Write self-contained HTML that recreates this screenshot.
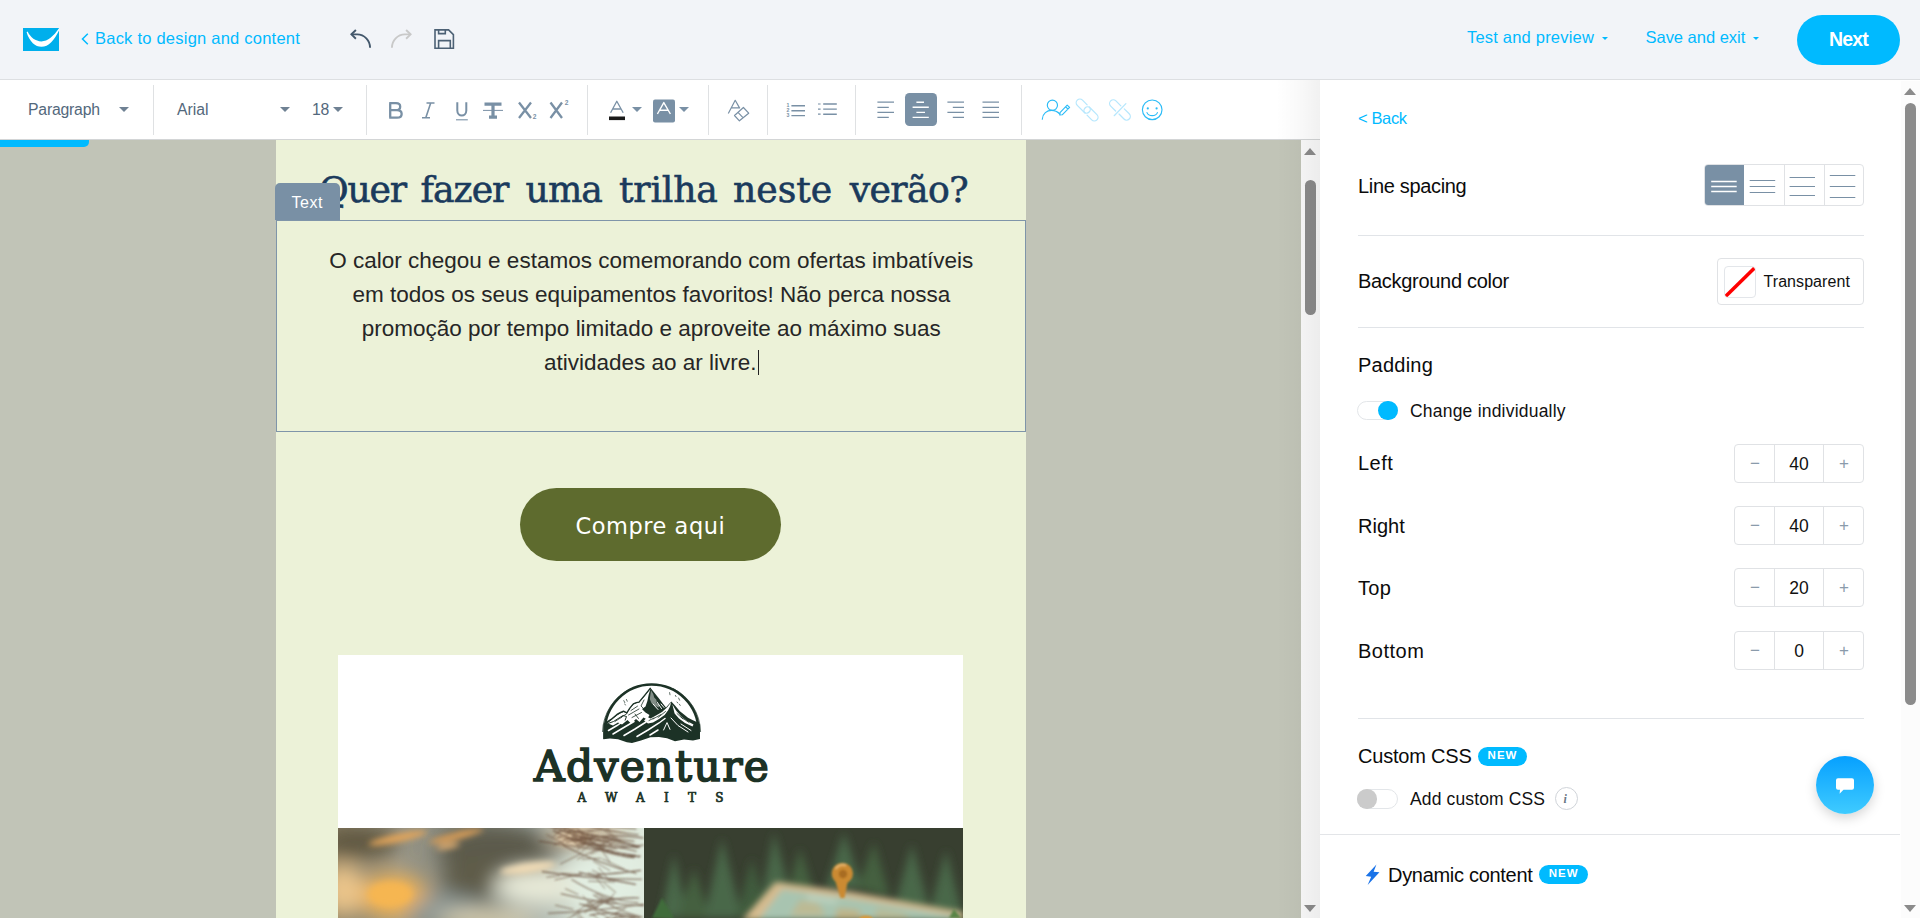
<!DOCTYPE html>
<html lang="en">
<head>
<meta charset="utf-8">
<title>Email editor</title>
<style>
*{box-sizing:border-box;margin:0;padding:0}
html,body{width:1920px;height:918px;overflow:hidden;background:#fff}
body{font-family:"Liberation Sans",sans-serif;color:#111;position:relative;-webkit-font-smoothing:antialiased}
.abs{position:absolute}
.t{position:absolute;white-space:nowrap;line-height:1;transform-origin:0 50%}
svg{display:block;overflow:visible}

/* ---------- header ---------- */
#header{left:0;top:0;width:1920px;height:80px;background:#f2f4f8;border-bottom:1px solid #dddfe2}
.blue{color:#00baff}

/* ---------- toolbar ---------- */
#toolbar{left:0;top:80px;width:1320px;height:60px;background:#fff;border-bottom:1px solid #d3d5d6}
.vsep{position:absolute;top:5px;width:1px;height:50px;background:#dfe1e3}
.tb{color:#53687c}

/* ---------- canvas ---------- */
#canvas{left:0;top:140px;width:1301px;height:778px;background:#c1c4b7;overflow:hidden}
#email{left:276px;top:0;width:750px;height:778px;background:#ecf2d8}
#cscroll{left:1301px;top:140px;width:19px;height:778px;background:#fafafa}

/* ---------- panel ---------- */
#panel{left:1320px;top:80px;width:580px;height:838px;background:#fff}
#pscroll{left:1901px;top:81px;width:19px;height:837px;background:#fcfcfc}
.lbl{font-size:20px;color:#0b0b0b}
.hr{position:absolute;height:1px;background:#e1e4e8}
.thumb{position:absolute;background:#8b8b8b;border-radius:5.5px;width:11px}
.arr{position:absolute;width:0;height:0;border-left:6.5px solid transparent;border-right:6.5px solid transparent}
.arr.up{border-bottom:7px solid #8b8b8b}
.arr.dn{border-top:7px solid #8b8b8b}
.badge{width:49px;height:19px;border-radius:10px;background:#00baff}
.stp{position:absolute;left:414px;width:130px;height:39px;border:1px solid #e0e2e5;border-radius:4px;background:#fff}
.stp i{position:absolute;top:0;width:1px;height:37px;background:#e0e2e5}
.stp b{position:absolute;top:0;height:37px;line-height:37px;text-align:center;font-weight:normal}
.stp .m,.stp .p{color:#8a9bab;font-size:17px;width:40px}
.stp .m{left:0}.stp .p{left:89px}
.stp .v{left:40px;width:48px;font-size:17.5px;color:#111;top:1px}
.tw{top:0;font-family:'DejaVu Serif','Liberation Serif',serif;font-size:36.2px;color:#1a3a5c;-webkit-text-stroke:.6px #1a3a5c}
</style>
</head>
<body>

<!-- ================= HEADER ================= -->
<div id="header" class="abs">
  <!-- logo -->
  <svg class="abs" style="left:23px;top:28px" width="36" height="23" viewBox="0 0 36 23">
    <rect width="36" height="23" fill="#00afec"/>
    <path d="M3.6 4.2 C6.5 13.8 12.4 18.8 18.4 18.8 C25.6 18.8 31.6 11.6 36 2.4 L36 0.3 C30.6 8.2 24.8 13.4 18.4 13.4 C12.4 13.4 7.6 9.6 4.6 3.6 Z" fill="#fff"/>
  </svg>
  <svg class="abs" style="left:81px;top:32.5px" width="8" height="12" viewBox="0 0 8 12" fill="none" stroke="#00baff" stroke-width="1.5"><path d="M6.8 0.8 L1.5 6 L6.8 11.2"/></svg>
  <div class="t blue" id="h-back" style="left:95px;top:30px;font-size:16.5px;letter-spacing:.23px">Back to design and content</div>
  <!-- undo -->
  <svg class="abs" style="left:349px;top:28px" width="24" height="22" viewBox="0 0 24 22" fill="none" stroke="#44586c" stroke-width="1.9" stroke-linecap="butt" stroke-linejoin="miter">
    <path d="M6.900 2 L2.400 6.350 L6.900 10.700"/><path d="M2.600 6.350 H8.200 A12.900 13.450 0 0 1 21.100 19.800"/>
  </svg>
  <!-- redo -->
  <svg class="abs" style="left:389px;top:28px" width="24" height="22" viewBox="0 0 24 22" fill="none" stroke="#c9c9c9" stroke-width="1.9" stroke-linecap="butt" stroke-linejoin="miter">
    <path d="M17.100 2 L21.600 6.350 L17.100 10.700"/><path d="M21.400 6.350 H15.800 A12.900 13.450 0 0 0 2.900 19.800"/>
  </svg>
  <!-- save -->
  <svg class="abs" style="left:434px;top:29px" width="22" height="21" viewBox="0 0 22 21" fill="none" stroke="#4d6175" stroke-width="1.600" stroke-linejoin="miter">
    <path d="M1 0.900 H14.600 L19.400 5.700 V19.300 H1 Z"/><path d="M4.600 0.900 V4.600 H11.300 V0.900"/><path d="M4.600 19.300 V11.600 H16.300 V19.300"/>
  </svg>
  <div class="t blue" id="h-test" style="left:1467px;top:29px;font-size:16.5px;letter-spacing:.2px">Test and preview</div>
  <div class="arr dn" style="left:1602px;top:36.5px;border-left-width:3px;border-right-width:3px;border-top:3px solid #00baff"></div>
  <div class="t blue" id="h-save" style="left:1645.5px;top:29px;font-size:16.5px;letter-spacing:-.02px">Save and exit</div>
  <div class="arr dn" style="left:1753px;top:36.5px;border-left-width:3px;border-right-width:3px;border-top:3px solid #00baff"></div>
  <div class="abs" style="left:1797px;top:15px;width:103px;height:50px;border-radius:25px;background:#00baff"></div>
  <div class="t" id="h-next" style="left:1829px;top:29.5px;font-size:19.5px;color:#fff;font-weight:bold;letter-spacing:-.8px">Next</div>
</div>

<!-- ================= TOOLBAR ================= -->
<div id="toolbar" class="abs">
  <div class="t tb" id="tb-par" style="left:28px;top:21.5px;font-size:15.8px;letter-spacing:-.22px">Paragraph</div>
  <div class="arr dn" style="left:118.700px;top:27px;border-left-width:5.200px;border-right-width:5.200px;border-top:5.500px solid #6f8193"></div>
  <div class="vsep" style="left:153px"></div>
  <div class="t tb" id="tb-font" style="left:177px;top:21.5px;font-size:15.8px">Arial</div>
  <div class="arr dn" style="left:279.700px;top:27px;border-left-width:5.200px;border-right-width:5.200px;border-top:5.500px solid #6f8193"></div>
  <div class="t tb" id="tb-size" style="left:312px;top:21.5px;font-size:15.8px;letter-spacing:-.3px">18</div>
  <div class="arr dn" style="left:333px;top:27px;border-left-width:5.200px;border-right-width:5.200px;border-top:5.500px solid #6f8193"></div>
  <div class="vsep" style="left:366px"></div>

  <!-- B I U T X2 X2 -->
  <svg class="abs" style="left:384px;top:18px" width="190" height="26" viewBox="384 98 190 26" fill="none" stroke="#7990a5" stroke-width="2" stroke-linejoin="round" stroke-linecap="butt">
    <!-- B -->
    <path d="M390.2 103.2 V117.6 M389.2 103.2 H396 C401.6 103.2 401.6 110.2 396 110.2 H390.2 M390.2 110.2 H397 C403.2 110.2 403.2 117.6 397 117.6 H389.2" stroke-width="2.3"/>
    <!-- I -->
    <path d="M426.5 103 H434.5 M422 117.8 H430 M430.7 103 L425.8 117.8" stroke-width="1.6"/>
    <!-- U -->
    <path d="M457.3 102.2 V110.5 C457.3 117.2 466.3 117.2 466.3 110.5 V102.2" stroke-width="2"/>
    <path d="M456 119.8 H467.8" stroke-width="1.1"/>
    <!-- T strike -->
    <path d="M484.5 104.2 H501.5 M493 104 V117.2 M489 117.2 H497" stroke-width="3.2"/>
    <path d="M483 110.4 H503" stroke-width="1" stroke="#7990a5"/>
    <!-- X sub -->
    <path d="M519 102.5 L531 118 M531 102.5 L519 118" stroke-width="2.3"/>
    <!-- X sup -->
    <path d="M550.5 102.5 L562 118 M562 102.5 L550.5 118" stroke-width="2.3"/>
  </svg>
  <div class="t" style="left:532.8px;top:33.8px;font-size:6.6px;font-weight:bold;color:#7990a5">2</div>
  <div class="t" style="left:564.8px;top:20.2px;font-size:6.6px;font-weight:bold;color:#7990a5">2</div>
  <div class="vsep" style="left:587px"></div>

  <!-- text colour -->
  <svg class="abs" style="left:606px;top:18px" width="90" height="26" viewBox="606 98 90 26" fill="none" stroke="#7990a5" stroke-width="1.3" stroke-linejoin="round">
    <path d="M610.6 112.8 L616.8 101.2 L623.2 112.8 M613 109 H620.8"/>
    <rect x="609" y="116.5" width="16" height="3.6" fill="#1a1a1a" stroke="none"/>
    <rect x="653" y="99.5" width="22" height="23" rx="2" fill="#7990a5" stroke="none"/>
    <path d="M657.4 114 L663.8 102.6 L670.4 114 M659.8 110.2 H668" stroke="#fff" stroke-width="1.4"/>
  </svg>
  <div class="arr dn" style="left:632px;top:26.800px;border-left-width:5px;border-right-width:5px;border-top:5.200px solid #7990a5"></div>
  <div class="arr dn" style="left:679px;top:26.800px;border-left-width:5px;border-right-width:5px;border-top:5.200px solid #7990a5"></div>
  <div class="vsep" style="left:708px"></div>

  <!-- clear format -->
  <svg class="abs" style="left:724px;top:18px" width="30" height="26" viewBox="724 98 30 26" fill="none" stroke="#7990a5" stroke-width="1.2" stroke-linejoin="round">
    <path d="M728.300 113.500 L735.200 100.300 L739.800 108.400 M731.400 107.800 H739.200"/>
    <path d="M743.400 107.500 L748.700 113.200 L739.400 120.800 L734.500 115.500 Z M738 112.300 L743.200 117.900"/>
  </svg>
  <div class="vsep" style="left:767px"></div>

  <!-- lists -->
  <svg class="abs" style="left:784px;top:18px" width="60" height="26" viewBox="784 98 60 26" fill="none" stroke="#7990a5" stroke-width="1.4">
    <path d="M791.4 105.7 H805 M791.4 110.7 H805 M791.4 115.6 H805"/>
    <path d="M823.2 104 H836.8 M823.2 109.1 H836.8 M823.2 114.2 H836.8"/>
    <path d="M818 104 H820.6 M818 109.1 H820.6 M818 114.2 H820.6" stroke-width="1.2"/>
  </svg>
  <div class="t" style="left:786.5px;top:23px;font-size:5.2px;font-weight:bold;color:#7990a5">1</div>
  <div class="t" style="left:786.5px;top:28px;font-size:5.2px;font-weight:bold;color:#7990a5">2</div>
  <div class="t" style="left:786.5px;top:33px;font-size:5.2px;font-weight:bold;color:#7990a5">3</div>
  <div class="vsep" style="left:855px"></div>

  <!-- align -->
  <svg class="abs" style="left:874px;top:12px" width="130" height="36" viewBox="874 92 130 36" fill="none" stroke="#7990a5" stroke-width="1.3">
    <path d="M877.4 102.2 H894 M877.4 107.3 H888.8 M877.4 112.4 H894 M877.4 117.4 H888.8"/>
    <rect x="905" y="93" width="32" height="33" rx="4.5" fill="#7990a5" stroke="none"/>
    <path d="M916.4 102.2 H924 M912.6 107.3 H928.8 M916.4 112.4 H925 M912.6 117.4 H928.8" stroke="#fff" stroke-width="1.4"/>
    <path d="M947.4 102.2 H964 M952.8 107.3 H964 M947.4 112.4 H964 M952.8 117.4 H964"/>
    <path d="M982.5 102.2 H999 M982.5 107.3 H999 M982.5 112.4 H999 M982.5 117.4 H999"/>
  </svg>
  <div class="vsep" style="left:1021px"></div>

  <!-- personalise / link / unlink / emoji -->
  <svg class="abs" style="left:1038px;top:16px" width="130" height="28" viewBox="1038 96 130 28" fill="none" stroke="#2bbcf7" stroke-width="1.15" stroke-linecap="round" stroke-linejoin="round">
    <circle cx="1052.4" cy="105.2" r="5.1"/>
    <path d="M1042.3 119.2 C1042.6 113.4 1047 110.4 1051.6 110.4 C1055.2 110.4 1057.8 112 1059.8 114"/>
    <path d="M1060 112.6 L1067.2 105.2 L1069.6 107.4 L1062.2 114.8 L1059.8 115 Z M1065.6 106.8 L1068 109"/>
    <g stroke="#b6e7fd" stroke-width="1.25">
      <path d="M-3.6 -3.7 H-10.2 A3.7 3.7 0 0 0 -10.2 3.7 H-0.8 A3.7 3.7 0 0 0 -0.8 -3.7" transform="translate(1087.1 110) rotate(45)"/>
      <path d="M3.6 3.7 H10.2 A3.7 3.7 0 0 0 10.2 -3.7 H0.8 A3.7 3.7 0 0 0 0.8 3.7" transform="translate(1087.1 110) rotate(45)"/>
      <path d="M7 -3.7 H0 A3.7 3.7 0 0 0 0 3.7 H7" transform="translate(1113.3 103.5) rotate(45)"/>
      <path d="M-7 -3.7 H0 A3.7 3.7 0 0 1 0 3.7 H-7" transform="translate(1126.6 116.4) rotate(45)"/>
      <path d="M1125.9 103.6 L1114.2 115.7"/>
    </g>
    <circle cx="1152.2" cy="109.8" r="9.8"/>
    <path d="M1147 112.6 C1148.6 116.6 1155.8 116.6 1157.4 112.6"/>
    <circle cx="1147.8" cy="108.4" r="1.1" fill="#2bbcf7" stroke="none"/>
    <circle cx="1156.6" cy="108.4" r="1.1" fill="#2bbcf7" stroke="none"/>
  </svg>
</div>
<!-- progress bar -->
<div class="abs" style="left:0;top:140px;width:89px;height:6.5px;background:#00baff;border-bottom-right-radius:5px;z-index:5"></div>

<!-- ================= CANVAS ================= -->
<div id="canvas" class="abs">
  <div id="email" class="abs">
    <!-- title -->
    <div class="abs" id="e-title" style="left:0;top:31.7px;width:750px;height:37px"><span class="t tw" id="tw0" style="left:43px;letter-spacing:-1.2px">Quer</span> <span class="t tw" id="tw1" style="left:144.6px;letter-spacing:-1.0px">fazer</span> <span class="t tw" id="tw2" style="left:249.5px;letter-spacing:-0.9px">uma</span> <span class="t tw" id="tw3" style="left:343px;letter-spacing:-0.2px">trilha</span> <span class="t tw" id="tw4" style="left:457px;letter-spacing:0.0px">neste</span> <span class="t tw" id="tw5" style="left:573.7px;letter-spacing:-0.6px">verão?</span></div>
    <!-- selected text block -->
    <div class="abs" style="left:0;top:80px;width:750px;height:212px;border:1px solid #7f95a9"></div>
    <div class="abs" style="left:-1px;top:43px;width:65px;height:37px;background:#7990a5;border-radius:5px 5px 0 0"></div>
    <div class="t" id="e-tag" style="left:15.5px;top:54.8px;font-size:16px;color:#fff;letter-spacing:.5px">Text</div>
    <div class="abs" id="e-para" style="left:50.3px;top:104.3px;width:650px;font-size:22.5px;line-height:33.75px;color:#262626;text-align:center">O calor chegou e estamos comemorando com ofertas imbatíveis em todos os seus equipamentos favoritos! Não perca nossa promoção por tempo limitado e aproveite ao máximo suas atividades ao ar livre.<span style="display:inline-block;width:1px;height:25px;background:#222;vertical-align:-5px;margin-left:1px"></span></div>
    <!-- button -->
    <div class="abs" style="left:244px;top:348px;width:261px;height:73px;border-radius:37px;background:#5e6b2e"></div>
    <div class="t" id="e-btn" style="left:299.5px;top:374.9px;font-family:'DejaVu Sans','Liberation Sans',sans-serif;font-size:22.5px;color:#fff;letter-spacing:.52px">Compre aqui</div>
    <!-- card -->
    <div class="abs" style="left:62px;top:515px;width:625px;height:173px;background:#fff"></div>
    <!-- emblem -->
    <svg class="abs" style="left:325px;top:542px" width="100" height="62" viewBox="0 0 100 62">
      <path d="M3.6 57 V50 A47 47.5 0 0 1 97.6 50 V57" fill="none" stroke="#1c3226" stroke-width="2.6"/>
      <path d="M1.5 50 A48.5 49.5 0 0 1 30 6.5" fill="none" stroke="#1c3226" stroke-width=".7"/>
      <path d="M99.6 50 A48.5 49.5 0 0 0 72 6.5" fill="none" stroke="#1c3226" stroke-width=".7"/>
      <path d="M2.4 42.5 L5.3 40.6 L10 37.4 L16 32.4 L19.6 30.4 L22.5 29.2 L25.8 30.8 L29 25.8 L32.3 21.8 L35.4 20.6 L38 20.2 L43.6 13.4 L49.6 5.9 L52.6 9.8 L58.4 16.9 L61.8 21.4 L65 25.6 L67.6 22.6 L70.3 19.5 L74 23.6 L78.9 29.2 L83 32.6 L87 35.7 L91.4 37.9 L95.2 39.8 L98.9 42 L98.9 56.9 L92 58.6 L83 57.4 L74 59.2 L66 56.2 L58 55 L49.5 55.2 L40 58.6 L31 61 L25.8 60.2 L17 57.2 L9 56.4 L2.4 57.2 Z" fill="#1c3226"/>
      <!-- snow faces -->
      <path d="M49.4 7 L43.8 14 L38.2 20.6 L35 21.2 L32.4 22.4 L29 26.4 L25.8 31.4 L23 30 L19.600 31.200 L16 33.400 L11 37.600 L6.500 41.200 L12 43.500 L17 40.500 L21 42.500 L26.500 38 L30 41.500 L35 37 L38.500 40 L42.500 35.500 L46 37.500 L48.500 33 L44.500 30.500 L41 27 L44.500 24.500 L46.400 19 L47.600 13 Z" fill="#fff"/>
      <path d="M50 8.200 L52.200 12 L53.200 15.600 L55.600 18 L55 20.400 L58.200 23.400 L57.600 25.600 L53.600 23.600 L50.400 21 L48.800 17 Z" fill="#fff" opacity=".45"/>
      <path d="M70.200 20.200 L66 25.600 L61 30 L55 33.600 L49.500 36.400 L46.500 35 L43 38.500 L47 41.600 L52 40.600 L58 37 L63.600 33 L67 28.400 L69 24.400 Z" fill="#fff"/>
      <path d="M71.400 22.400 L75 28.600 L80 34.200 L86 39 L92.500 42.600 L91.500 44.400 L84 41 L78 36.600 L73.600 31.400 Z" fill="#fff"/>
      <path d="M75.500 26 L79 30 L84 34 L89 37.500 L88 38.500 L82.500 35.500 L78 32 Z" fill="#1c3226" opacity=".0"/>
      <!-- white streaks over dark -->
      <g stroke="#fff" stroke-width="1.500" stroke-linecap="round" fill="none">
        <path d="M7.500 48.500 L16 43.500 L24 38"/>
        <path d="M12 52 L22 46 L33 39.500"/>
        <path d="M23 53.500 L34 47 L45 40"/>
        <path d="M36 54.500 L47 48 L58 41 L64 36.500"/>
        <path d="M49 53 L57 48"/>
      </g>
      <g stroke="#fff" stroke-width="1" stroke-linecap="round" fill="none">
        <path d="M62.600 48 L66 40.600 L69 47.400"/>
        <path d="M70 36 L77 43.500 L87 50"/>
        <path d="M80 42 L90 48.500"/>
        <path d="M60 22 L63 25.500 M56 20 L60.500 26.500 M52 22 L57 27.500"/>
      </g>
      <path d="M3 42.500 L5.300 40.600 L10 37.400 L16 32.400 L19.600 30.400 L22.500 29.200 L25.800 30.800 L29 25.800 L32.300 21.800 L35.400 20.600 L38 20.200 L43.600 13.400 L49.600 5.900" fill="none" stroke="#1c3226" stroke-width="1.300" stroke-linejoin="round"/>
      <path d="M7 41.500 L12.500 39.500 L18 36 L22 33.500 L25.500 34.500 L24 38.500" fill="none" stroke="#1c3226" stroke-width="1"/>
      <!-- dark texture over snow -->
      <g stroke="#1c3226" stroke-width=".8" stroke-linecap="round" fill="none">
        <path d="M30 28.500 L36.500 24.200 M27.500 33 L38 27 M31 35.500 L40.500 30.500 M20 35.500 L26 31.500 M14 39.500 L21 35 M34 32 L37.500 36.500 M43 18 L40 24 L43.500 27.500"/>
        <path d="M52 37 L60 32.500 M57 35.500 L64.500 29.500 M48 38.500 L53 36"/>
        <path d="M76 31.500 L82 37 M80 35 L88 40.500"/>
      </g>
      <g stroke="#1c3226" stroke-width=".7" stroke-linecap="round">
        <path d="M22.800 18.600 L23.800 20.600 M25.400 17.400 L26.200 19.200 M23.800 22 L24.400 23"/>
        <path d="M68.600 10.600 L69 12.800 M74.400 13.400 L75 14.600 M77.600 16 L78.600 18.200 M76 20 L76.800 21 M78.400 22.200 L79.200 23.400"/>
      </g>
    </svg>
    <div class="t" id="e-adv" style="left:258px;top:605.8px;font-family:'DejaVu Serif','Liberation Serif',serif;font-size:42.3px;color:#1c3226;letter-spacing:1.45px;-webkit-text-stroke:1.7px #1c3226">Adventure</div>
    <div class="t" id="e-awa" style="left:301.500px;top:651.500px;font-family:'DejaVu Serif','Liberation Serif',serif;font-size:12px;color:#1c3226;letter-spacing:19.300px;-webkit-text-stroke:.7px #1c3226">AWAITS</div>
    <!-- photos -->
    <svg class="abs" style="left:62px;top:688px" width="625" height="90" viewBox="0 0 625 90">
      <defs>
        <filter id="b3" x="-20%" y="-20%" width="140%" height="140%"><feGaussianBlur stdDeviation="3"/></filter>
        <filter id="b6" x="-30%" y="-30%" width="160%" height="160%"><feGaussianBlur stdDeviation="6"/></filter>
        <filter id="b10" x="-40%" y="-40%" width="180%" height="180%"><feGaussianBlur stdDeviation="10"/></filter>
        <filter id="b4" x="-30%" y="-30%" width="160%" height="160%"><feGaussianBlur stdDeviation="4"/></filter>
        <filter id="b1" x="-10%" y="-10%" width="120%" height="120%"><feGaussianBlur stdDeviation="1.2"/></filter>
        <clipPath id="cl"><rect x="0" y="0" width="306" height="90"/></clipPath>
        <clipPath id="cr"><rect x="306" y="0" width="319" height="90"/></clipPath>
        <linearGradient id="gl" x1="0" x2="1" y1="0" y2="0">
          <stop offset="0" stop-color="#8d8267"/><stop offset=".2" stop-color="#9a9788"/><stop offset=".45" stop-color="#7e8278"/><stop offset=".62" stop-color="#a4aca6"/><stop offset=".8" stop-color="#d2dccf"/><stop offset="1" stop-color="#dfeadd"/>
        </linearGradient>
      </defs>
      <g clip-path="url(#cl)">
        <rect width="306" height="90" fill="url(#gl)"/>
        <g filter="url(#b10)">
          <ellipse cx="20" cy="14" rx="40" ry="16" fill="#5f5640"/>
          <ellipse cx="160" cy="22" rx="60" ry="26" fill="#5b5a4c"/>
          <ellipse cx="135" cy="50" rx="30" ry="22" fill="#5f5c48"/>
          <ellipse cx="55" cy="68" rx="34" ry="22" fill="#f2b352"/>
          <ellipse cx="5" cy="62" rx="22" ry="26" fill="#eac48a"/>
          <ellipse cx="110" cy="82" rx="40" ry="14" fill="#8e9a98"/>
          <ellipse cx="200" cy="58" rx="44" ry="18" fill="#e8ead8"/>
          <ellipse cx="150" cy="92" rx="50" ry="8" fill="#e9dcb8"/>
          <ellipse cx="268" cy="45" rx="36" ry="60" fill="#e2eee2"/>
          <ellipse cx="226" cy="14" rx="24" ry="12" fill="#8c8c80"/>
          <ellipse cx="250" cy="6" rx="40" ry="12" fill="#c2ac8c"/>
        </g>
        <g filter="url(#b3)">
          <ellipse cx="60" cy="10" rx="30" ry="4" fill="#e3a55a" transform="rotate(-12 60 10)"/>
          <ellipse cx="118" cy="8" rx="28" ry="3.4" fill="#e0a056" transform="rotate(-14 118 8)"/>
          <ellipse cx="110" cy="18" rx="12" ry="2.6" fill="#eeb673" transform="rotate(-10 110 18)"/>
          <ellipse cx="190" cy="40" rx="28" ry="5" fill="#f1dcb6" transform="rotate(-8 190 40)"/>
          <ellipse cx="52" cy="66" rx="22" ry="12" fill="#f6b651"/>
          <ellipse cx="234" cy="10" rx="16" ry="8" fill="#e7d2b0"/>
        </g>
        <g filter="url(#b1)" stroke="#5f4230" stroke-width="1.1" fill="none" opacity=".8" stroke-linecap="round">
          <path d="M297.5 27.4 Q256.4 23.0 215.2 2.7"/><path d="M254.8 11.9 L237.6 -1.0" stroke-width=".8"/><path d="M251.4 11.0 L241.8 8.9" stroke-width=".8"/><path d="M232.0 5.5 L220.0 9.1" stroke-width=".8"/><path d="M301.8 89.8 Q268.9 85.9 236.0 106.7"/><path d="M248.2 102.3 L237.6 91.6" stroke-width=".8"/><path d="M269.9 99.9 L258.6 102.2" stroke-width=".8"/><path d="M256.8 100.6 L239.0 88.3" stroke-width=".8"/><path d="M298.1 1.0 Q255.9 -3.7 213.8 -7.4"/><path d="M243.2 -4.7 L229.8 3.5" stroke-width=".8"/><path d="M237.5 -6.6 L219.1 -5.9" stroke-width=".8"/><path d="M228.6 -4.5 L215.4 8.9" stroke-width=".8"/><path d="M300.2 6.8 Q255.6 2.4 211.0 -14.2"/><path d="M271.3 1.0 L249.6 3.1" stroke-width=".8"/><path d="M226.6 -11.6 L206.0 -9.0" stroke-width=".8"/><path d="M242.4 -7.1 L219.3 5.4" stroke-width=".8"/><path d="M302.6 42.4 Q280.7 45.6 258.7 46.7"/><path d="M263.3 48.2 L250.2 45.0" stroke-width=".8"/><path d="M271.8 42.5 L255.5 33.2" stroke-width=".8"/><path d="M286.4 41.3 L264.5 31.0" stroke-width=".8"/><path d="M299.9 19.8 Q251.6 14.1 203.3 -4.5"/><path d="M239.1 6.8 L216.3 17.0" stroke-width=".8"/><path d="M254.8 7.9 L240.3 18.7" stroke-width=".8"/><path d="M215.4 -3.6 L204.2 -11.1" stroke-width=".8"/><path d="M300.8 18.3 Q261.7 7.2 222.6 2.4"/><path d="M257.7 8.8 L239.5 21.5" stroke-width=".8"/><path d="M244.9 7.1 L225.8 12.0" stroke-width=".8"/><path d="M274.8 15.4 L252.8 25.9" stroke-width=".8"/><path d="M299.9 74.8 Q267.0 72.3 234.0 51.6"/><path d="M277.7 64.4 L265.9 54.9" stroke-width=".8"/><path d="M266.7 60.4 L258.7 50.6" stroke-width=".8"/><path d="M276.1 65.6 L267.7 76.1" stroke-width=".8"/><path d="M297.5 56.4 Q269.3 51.8 241.1 44.4"/><path d="M276.4 54.0 L250.5 53.1" stroke-width=".8"/><path d="M264.2 46.8 L254.4 42.4" stroke-width=".8"/><path d="M271.6 52.9 L260.7 39.5" stroke-width=".8"/><path d="M301.3 90.1 Q276.5 81.9 251.8 87.1"/><path d="M270.7 91.1 L247.2 96.6" stroke-width=".8"/><path d="M278.7 87.9 L267.7 95.5" stroke-width=".8"/><path d="M270.6 89.9 L256.7 82.2" stroke-width=".8"/><path d="M305.8 76.2 Q258.1 83.1 210.4 85.2"/><path d="M234.9 81.3 L217.5 77.2" stroke-width=".8"/><path d="M275.6 76.2 L262.5 69.5" stroke-width=".8"/><path d="M237.6 85.4 L221.5 97.6" stroke-width=".8"/><path d="M305.6 93.8 Q273.7 85.9 241.8 75.9"/><path d="M278.9 84.6 L259.7 95.8" stroke-width=".8"/><path d="M254.3 79.3 L234.6 87.7" stroke-width=".8"/><path d="M283.2 88.5 L258.8 96.4" stroke-width=".8"/><path d="M300.8 70.0 Q275.0 69.0 249.2 78.3"/><path d="M260.5 79.3 L245.4 76.6" stroke-width=".8"/><path d="M256.0 78.6 L244.9 68.1" stroke-width=".8"/><path d="M280.6 75.7 L258.1 65.8" stroke-width=".8"/><path d="M305.8 77.7 Q264.4 76.1 223.1 65.8"/><path d="M274.5 70.2 L249.0 74.4" stroke-width=".8"/><path d="M254.9 72.9 L239.0 83.3" stroke-width=".8"/><path d="M240.0 66.5 L227.4 60.7" stroke-width=".8"/><path d="M301.9 19.1 Q273.4 11.4 245.0 10.3"/><path d="M253.8 10.8 L237.5 13.1" stroke-width=".8"/><path d="M254.0 11.2 L229.4 11.3" stroke-width=".8"/><path d="M266.7 13.8 L258.3 12.1" stroke-width=".8"/><path d="M296.0 13.3 Q250.1 8.9 204.1 -6.8"/><path d="M228.4 -1.1 L214.6 -0.6" stroke-width=".8"/><path d="M237.8 2.3 L227.9 4.0" stroke-width=".8"/><path d="M254.7 3.0 L232.8 3.2" stroke-width=".8"/><path d="M303.6 51.2 Q253.9 51.5 204.3 43.6"/><path d="M243.7 46.7 L223.2 45.3" stroke-width=".8"/><path d="M242.0 46.3 L217.1 51.9" stroke-width=".8"/><path d="M221.6 47.5 L208.9 49.2" stroke-width=".8"/><path d="M304.4 89.3 Q279.9 83.9 255.5 66.9"/><path d="M287.6 80.1 L278.3 84.8" stroke-width=".8"/><path d="M266.7 74.4 L255.9 80.5" stroke-width=".8"/><path d="M270.3 71.6 L246.5 84.7" stroke-width=".8"/><path d="M305.5 17.0 Q272.6 23.7 239.6 11.4"/><path d="M252.9 10.5 L237.1 10.9" stroke-width=".8"/><path d="M272.4 12.3 L258.6 18.5" stroke-width=".8"/><path d="M285.0 15.5 L269.1 2.0" stroke-width=".8"/><path d="M302.2 28.1 Q265.6 30.9 228.9 3.1"/><path d="M245.6 11.6 L235.7 5.1" stroke-width=".8"/><path d="M278.5 21.7 L265.6 11.3" stroke-width=".8"/><path d="M261.7 16.8 L238.9 10.0" stroke-width=".8"/><path d="M305.2 9.9 Q266.6 4.2 228.1 14.2"/><path d="M279.4 12.5 L263.7 0.5" stroke-width=".8"/><path d="M238.7 14.4 L216.2 2.7" stroke-width=".8"/><path d="M242.5 10.8 L218.9 9.5" stroke-width=".8"/><path d="M301.5 28.9 Q251.4 19.8 201.3 13.2"/><path d="M239.8 17.7 L229.8 8.2" stroke-width=".8"/><path d="M268.4 21.9 L254.8 16.5" stroke-width=".8"/><path d="M225.8 15.8 L208.8 6.8" stroke-width=".8"/><path d="M296.2 29.7 Q268.0 28.0 239.9 2.4"/><path d="M260.7 10.6 L244.1 22.8" stroke-width=".8"/><path d="M275.7 21.7 L259.9 21.5" stroke-width=".8"/><path d="M251.1 7.2 L234.0 12.5" stroke-width=".8"/><path d="M299.4 93.2 Q252.4 96.3 205.3 97.8"/><path d="M248.3 94.8 L239.4 84.4" stroke-width=".8"/><path d="M267.2 96.2 L254.6 86.8" stroke-width=".8"/><path d="M266.4 96.9 L242.8 101.6" stroke-width=".8"/><path d="M298.4 23.2 Q268.9 16.3 239.4 16.3"/><path d="M264.9 17.9 L239.6 31.1" stroke-width=".8"/><path d="M261.3 17.3 L235.9 12.0" stroke-width=".8"/><path d="M268.1 16.7 L253.2 16.0" stroke-width=".8"/><path d="M298.0 45.3 Q261.6 35.9 225.2 17.5"/><path d="M272.2 34.8 L263.5 21.5" stroke-width=".8"/><path d="M262.9 30.3 L244.3 31.1" stroke-width=".8"/><path d="M243.4 25.4 L222.5 36.0" stroke-width=".8"/>
        </g>
        
      </g>
      <g clip-path="url(#cr)">
        <rect x="306" width="319" height="90" fill="#383f30"/>
        <g filter="url(#b4)" fill="#4a6748">
          <path d="M322 90 L336 26 L350 90 Z"/><path d="M340 90 L356 40 L372 90 Z" fill="#44603f"/>
          <path d="M366 90 L384 10 L404 90 Z"/><path d="M398 90 L414 30 L430 90 Z" fill="#415c3e"/>
          <path d="M420 90 L436 4 L456 80 Z"/><path d="M448 70 L462 20 L476 64 Z" fill="#44603f"/>
          <path d="M488 60 L506 4 L524 60 Z"/><path d="M520 60 L536 14 L552 70 Z" fill="#44603f"/>
          <path d="M556 80 L574 16 L592 84 Z"/><path d="M590 90 L608 22 L625 90 Z" fill="#4a6748"/>
        </g>
        <g filter="url(#b3)">
          <path d="M437.600 54 L514 64 L625 84 L625 92 L404 92 Z" fill="#d6bb8e"/>
          <path d="M444 61 L512 70 L618 88 L618 92 L420 92 Z" fill="#a8c4b0"/>
          <path d="M462 72 L480 75 L488 88 L452 88 Z" fill="#d0b078" opacity=".5"/><path d="M500 80 L520 82 L526 92 L496 92 Z" fill="#cfa868" opacity=".55"/><path d="M540 80 L566 85 L574 92 L534 92 Z" fill="#cfae76" opacity=".4"/><path d="M470 66 L500 71 L498 76 L468 72 Z" fill="#c9dac8" opacity=".6"/>
        </g>
        <g filter="url(#b1)">
          <circle cx="504.400" cy="45.500" r="10.600" fill="#cb8a33"/>
          <circle cx="505" cy="46" r="4.200" fill="#a86c24"/><path d="M497.500 41 A8 8 0 0 1 508 37.500" stroke="#e6b46a" stroke-width="2.200" fill="none"/>
          <path d="M497 52 L502.500 70 L506.500 70 L510 52 Z" fill="#cb8a33"/>
          <path d="M314 90 L324 70 L336 90 Z" fill="#3f6c3a"/>
          <path d="M611 90 L616 81 L623 90 Z" fill="#5a8446"/>
          <ellipse cx="528" cy="91" rx="7" ry="3.500" fill="#d99a3a"/>
        </g>
      </g>
    </svg>
  </div>
</div>
<div id="cscroll" class="abs">
  <div class="arr up" style="left:3px;top:8px"></div>
  <div class="thumb" style="left:4px;top:40px;height:135px"></div>
  <div class="arr dn" style="left:3px;top:764.5px"></div>
</div>

<div class="abs" style="left:1276px;top:80px;width:44px;height:838px;background:linear-gradient(90deg,rgba(0,0,0,0) 0%,rgba(0,0,0,.02) 45%,rgba(0,0,0,.055) 100%);z-index:6;pointer-events:none"></div>
<!-- ================= PANEL ================= -->
<div id="panel" class="abs">
  <!-- coordinates inside panel: x-1320, y-80 -->
  <div class="t blue" id="p-back" style="left:38px;top:30px;font-size:16.5px;letter-spacing:-.38px">&lt; Back</div>

  <div class="t lbl" id="p-ls" style="left:38px;top:96.4px;letter-spacing:-.33px">Line spacing</div>
  <!-- line spacing button group -->
  <div class="abs" style="left:384px;top:84px;width:160px;height:42px;border:1px solid #e0e2e5;border-radius:4px;overflow:hidden;background:#fff">
    <div class="abs" style="left:-1px;top:-1px;width:40px;height:42px;background:#7990a5"></div>
    <div class="abs" style="left:79px;top:0;width:1px;height:40px;background:#e0e2e5"></div>
    <div class="abs" style="left:119px;top:0;width:1px;height:40px;background:#e0e2e5"></div>
    <svg class="abs" style="left:-1px;top:-1px" width="160" height="42" viewBox="0 0 160 42" fill="none" stroke="#7990a5" stroke-width="1.2">
      <path d="M7.2 17.5 H32.7 M7.2 22.5 H32.7 M7.2 27.5 H32.7" stroke="#fff" stroke-width="1.3"/>
      <path d="M45.7 16.5 H71.200 M45.7 22.5 H71.200 M45.7 28.5 H71.200"/>
      <path d="M85.600 13.5 H111 M85.600 22.5 H111 M85.600 31.5 H111"/>
      <path d="M125.800 11.5 H151.300 M125.800 22.5 H151.300 M125.800 33.5 H151.300"/>
    </svg>
  </div>
  <div class="hr" style="left:38px;top:155px;width:506px"></div>

  <div class="t lbl" id="p-bg" style="left:38px;top:191px;letter-spacing:-.3px">Background color</div>
  <div class="abs" style="left:397px;top:178px;width:147px;height:47px;border:1px solid #e0e2e5;border-radius:4px;background:#fff"></div>
  <div class="abs" style="left:404px;top:186px;width:32px;height:32px;border:1px solid #e3e6ea;border-radius:4px;overflow:hidden;background:#fff">
    <svg width="30" height="30" viewBox="0 0 30 30"><path d="M0.500 29.500 L29.500 1" stroke="#f00" stroke-width="3.500"/></svg>
  </div>
  <div class="t" id="p-tr" style="left:443.5px;top:193.7px;font-size:16px;color:#111;letter-spacing:.07px">Transparent</div>
  <div class="hr" style="left:38px;top:247px;width:506px"></div>

  <div class="t lbl" id="p-pad" style="left:38px;top:275px;letter-spacing:.24px">Padding</div>
  <!-- toggle on -->
  <div class="abs" style="left:37px;top:321px;width:41px;height:19px;border-radius:10px;background:#fff;border:1px solid #e3e6e9"></div>
  <div class="abs" style="left:58.300px;top:320.600px;width:19.600px;height:19.600px;border-radius:50%;background:#00baff"></div>
  <div class="t" id="p-ci" style="left:90px;top:322.6px;font-size:17.5px;color:#111;letter-spacing:.21px">Change individually</div>

  <div class="t lbl" id="p-l" style="left:38px;top:373px;letter-spacing:.45px">Left</div>
  <div class="t lbl" id="p-r" style="left:38px;top:436px">Right</div>
  <div class="t lbl" id="p-t" style="left:38px;top:498px;letter-spacing:.3px">Top</div>
  <div class="t lbl" id="p-b" style="left:38px;top:561px;letter-spacing:.5px">Bottom</div>

  <div class="stp" style="top:363.5px"><b class="m">&#8722;</b><i style="left:39px"></i><b class="v">40</b><i style="left:87.5px"></i><b class="p">+</b></div>
  <div class="stp" style="top:426px"><b class="m">&#8722;</b><i style="left:39px"></i><b class="v">40</b><i style="left:87.5px"></i><b class="p">+</b></div>
  <div class="stp" style="top:488.3px"><b class="m">&#8722;</b><i style="left:39px"></i><b class="v">20</b><i style="left:87.5px"></i><b class="p">+</b></div>
  <div class="stp" style="top:551px"><b class="m">&#8722;</b><i style="left:39px"></i><b class="v">0</b><i style="left:87.5px"></i><b class="p">+</b></div>
  <div class="hr" style="left:38px;top:638px;width:506px"></div>

  <div class="t lbl" id="p-css" style="left:38px;top:666px;letter-spacing:-.2px">Custom CSS</div>
  <div class="abs badge" style="left:158px;top:667px"></div>
  <div class="t" id="p-new1" style="left:167.600px;top:669.700px;font-size:11.5px;font-weight:bold;color:#fff;letter-spacing:1px">NEW</div>
  <!-- toggle off -->
  <div class="abs" style="left:37px;top:709.300px;width:41px;height:19.400px;border-radius:10px;background:#fff;border:1px solid #e3e6e9"></div>
  <div class="abs" style="left:37px;top:709.200px;width:19.600px;height:19.600px;border-radius:50%;background:#cbcbcb"></div>
  <div class="t" id="p-acss" style="left:90px;top:710.5px;font-size:17.5px;color:#111;letter-spacing:.13px">Add custom CSS</div>
  <div class="abs" style="left:235px;top:707px;width:23px;height:23px;border-radius:50%;border:1px solid #d0d4d9;background:#fff"></div>
  <div class="t" id="p-i" style="left:243.500px;top:712.500px;font-family:'Liberation Serif',serif;font-style:italic;font-weight:bold;font-size:12px;color:#6b7785">i</div>

  <div class="hr" style="left:0;top:754px;width:580px;background:#e3e5e8"></div>

  <svg class="abs" style="left:45px;top:784px" width="15" height="21.500" viewBox="0 0 16 22"><path d="M12.200 0 L0.800 12.400 L6.600 13 L2.800 22 L15.400 8.400 L9.200 7.800 Z" fill="#1a73e8"/></svg>
  <div class="t lbl" id="p-dyn" style="left:68px;top:785px;letter-spacing:-.3px">Dynamic content</div>
  <div class="abs badge" style="left:219px;top:785px"></div>
  <div class="t" id="p-new2" style="left:228.800px;top:787.700px;font-size:11.5px;font-weight:bold;color:#fff;letter-spacing:1px">NEW</div>

  <!-- chat bubble -->
  <div class="abs" style="left:496px;top:676px;width:58px;height:58px;border-radius:50%;background:linear-gradient(180deg,#06a0ff 0%,#3fcbff 100%);box-shadow:0 4px 12px rgba(0,0,0,.17)"></div>
  <svg class="abs" style="left:515px;top:696.800px" width="20" height="18.500" viewBox="0 0 20 18"><path d="M3 1 H17 A2 2 0 0 1 19 3 V10.500 A2 2 0 0 1 17 12.500 H8.500 L4.600 16.500 L5 12.500 H3 A2 2 0 0 1 1 10.500 V3 A2 2 0 0 1 3 1 Z" fill="#fff"/></svg>
</div>
<div id="pscroll" class="abs">
  <div class="arr up" style="left:3px;top:7px"></div>
  <div class="thumb" style="left:4px;top:22px;height:601.5px"></div>
  <div class="arr dn" style="left:3px;top:823.5px"></div>
</div>

</body>
</html>
